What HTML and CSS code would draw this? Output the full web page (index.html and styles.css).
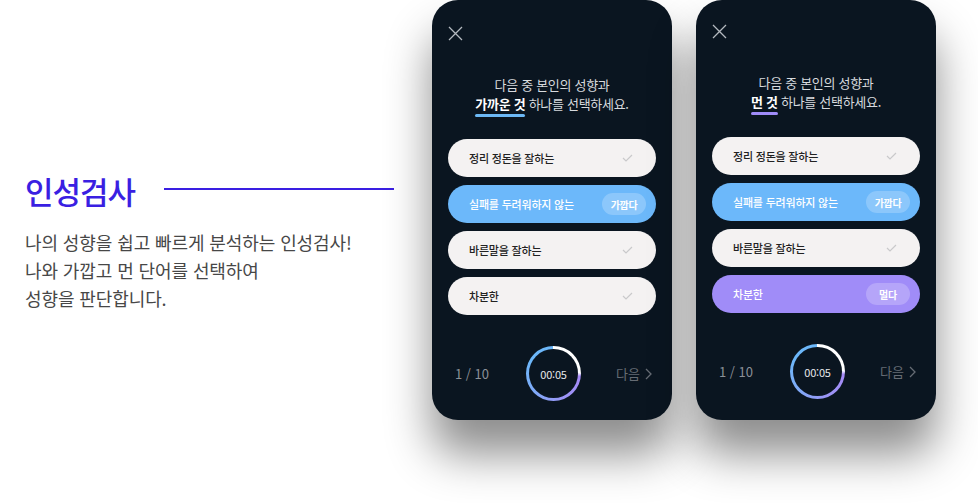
FILE: index.html
```html
<!DOCTYPE html>
<html lang="ko">
<head>
<meta charset="utf-8">
<title>인성검사</title>
<link rel="stylesheet" href="styles.css">
</head>
<body>
<div class="page">
  <section class="intro">
    <div class="intro-head">
      <h1 class="intro-title">인성검사</h1>
      <span class="intro-line"></span>
    </div>
    <p class="intro-desc">나의 성향을 쉽고 빠르게 분석하는 인성검사!<br>나와 가깝고 먼 단어를 선택하여<br>성향을 판단합니다.</p>
  </section>

  <div class="phones">
    <div class="phone">
      <svg class="close" width="15" height="15" viewBox="0 0 15 15"><path d="M1 1L14 14M14 1L1 14" stroke="#b4b9bf" stroke-width="1.3" fill="none"/></svg>
      <p class="question">다음 중 본인의 성향과<br><b class="hl hl-blue">가까운 것</b> 하나를 선택하세요.</p>
      <ul class="options">
        <li class="option">정리 정돈을 잘하는<svg class="check" width="11" height="8" viewBox="0 0 11 8"><path d="M1 4L4 7L10 1" stroke="#c9c9cb" stroke-width="1.2" fill="none"/></svg></li>
        <li class="option option-blue">실패를 두려워하지 않는<span class="badge">가깝다</span></li>
        <li class="option">바른말을 잘하는<svg class="check" width="11" height="8" viewBox="0 0 11 8"><path d="M1 4L4 7L10 1" stroke="#c9c9cb" stroke-width="1.2" fill="none"/></svg></li>
        <li class="option">차분한<svg class="check" width="11" height="8" viewBox="0 0 11 8"><path d="M1 4L4 7L10 1" stroke="#c9c9cb" stroke-width="1.2" fill="none"/></svg></li>
      </ul>
      <div class="footer">
        <span class="count">1 / 10</span>
        <div class="timer"><span class="timer-in">00:05</span></div>
        <span class="next">다음 <svg width="7" height="12" viewBox="0 0 7 12"><path d="M1 1L6 6L1 11" stroke="#666c74" stroke-width="1.3" fill="none"/></svg></span>
      </div>
    </div>

    <div class="phone phone-alt">
      <svg class="close" width="15" height="15" viewBox="0 0 15 15"><path d="M1 1L14 14M14 1L1 14" stroke="#b4b9bf" stroke-width="1.3" fill="none"/></svg>
      <p class="question">다음 중 본인의 성향과<br><b class="hl hl-purple">먼 것</b> 하나를 선택하세요.</p>
      <ul class="options">
        <li class="option">정리 정돈을 잘하는<svg class="check" width="11" height="8" viewBox="0 0 11 8"><path d="M1 4L4 7L10 1" stroke="#c9c9cb" stroke-width="1.2" fill="none"/></svg></li>
        <li class="option option-blue">실패를 두려워하지 않는<span class="badge">가깝다</span></li>
        <li class="option">바른말을 잘하는<svg class="check" width="11" height="8" viewBox="0 0 11 8"><path d="M1 4L4 7L10 1" stroke="#c9c9cb" stroke-width="1.2" fill="none"/></svg></li>
        <li class="option option-purple">차분한<span class="badge">멀다</span></li>
      </ul>
      <div class="footer">
        <span class="count">1 / 10</span>
        <div class="timer"><span class="timer-in">00:05</span></div>
        <span class="next">다음 <svg width="7" height="12" viewBox="0 0 7 12"><path d="M1 1L6 6L1 11" stroke="#666c74" stroke-width="1.3" fill="none"/></svg></span>
      </div>
    </div>
  </div>
</div>
</body>
</html>
```

FILE: styles.css
```css
* { box-sizing: border-box; }
html, body { margin: 0; padding: 0; background: #fff; }
body {
  width: 978px;
  height: 503px;
  overflow: hidden;
  font-family: "Noto Sans CJK KR", "Noto Sans", sans-serif;
}
.page {
  display: flex;
  align-items: flex-start;
  height: 503px;
}
.intro {
  width: 432px;
  padding: 170px 0 0 25px;
}
.intro-head {
  display: flex;
  align-items: center;
}
.intro-title {
  margin: 0;
  font-size: 31px;
  font-weight: 500;
  letter-spacing: -1px;
  line-height: 42px;
  color: #3a1fe2;
}
.intro-line {
  display: block;
  width: 230px;
  height: 2px;
  margin-left: 29px;
  margin-top: -4px;
  background: #3a1fe2;
}
.intro-desc {
  margin: 16px 0 0;
  font-size: 18px;
  line-height: 28px;
  letter-spacing: -0.1px;
  color: #474747;
}
.phones {
  display: flex;
  gap: 24px;
}
.phone {
  width: 240px;
  height: 420px;
  border-radius: 26px;
  background: #0a1520;
  box-shadow: 0 34px 46px rgba(0, 0, 0, 0.45);
  padding: 26px 16px 0;
  display: flex;
  flex-direction: column;
}
.phone-alt { padding-top: 24px; }
.close { display: block; }
.question {
  margin: 34px 0 0;
  text-align: center;
  color: #d7dade;
  font-size: 13px;
  line-height: 19px;
  letter-spacing: -0.3px;
}
.hl {
  position: relative;
  display: inline-block;
  color: #fff;
  font-weight: 700;
}
.hl::after {
  content: "";
  position: absolute;
  left: 0;
  right: 0;
  bottom: -4px;
  height: 3px;
  border-radius: 2px;
}
.hl-blue::after { background: #6cb8f5; }
.hl-purple::after { background: #a08cf8; }
.options {
  list-style: none;
  margin: 26px 0 0;
  padding: 0;
  display: flex;
  flex-direction: column;
  gap: 8px;
}
.option {
  height: 38px;
  border-radius: 19px;
  background: #f4f2f2;
  color: #222;
  font-size: 11px;
  font-weight: 500;
  letter-spacing: -0.2px;
  display: flex;
  align-items: center;
  justify-content: space-between;
  padding: 0 23px 0 21px;
}
.option-blue { background: #6cb8fa; color: #fff; padding-right: 10px; }
.option-purple { background: #a08cf8; color: #fff; padding-right: 10px; }
.badge {
  width: 44px;
  height: 22px;
  border-radius: 11px;
  background: rgba(255, 255, 255, 0.22);
  color: #fff;
  font-size: 10px;
  font-weight: 700;
  display: flex;
  align-items: center;
  justify-content: center;
  letter-spacing: -0.3px;
}
.footer {
  margin-top: 31px;
  display: flex;
  align-items: center;
  justify-content: space-between;
  padding: 0 4px 0 7px;
}
.count {
  width: 60px;
  color: #8a9097;
  font-size: 13px;
}
.timer {
  width: 55px;
  height: 55px;
  border-radius: 50%;
  background: conic-gradient(from 0deg, #ffffff 0deg, #ffffff 88deg, #a58af6 96deg, #9a95f6 160deg, #7eabf8 230deg, #6cb7f9 300deg, #6cb7f9 360deg);
  padding: 3px;
}
.timer-in {
  display: flex;
  width: 100%;
  height: 100%;
  border-radius: 50%;
  background: #0a1520;
  align-items: center;
  justify-content: center;
  color: #e6e8ea;
  font-size: 11px;
  letter-spacing: -0.2px;
}
.next {
  width: 60px;
  display: flex;
  align-items: center;
  justify-content: flex-end;
  gap: 5px;
  color: #666c74;
  font-size: 13px;
}
```
